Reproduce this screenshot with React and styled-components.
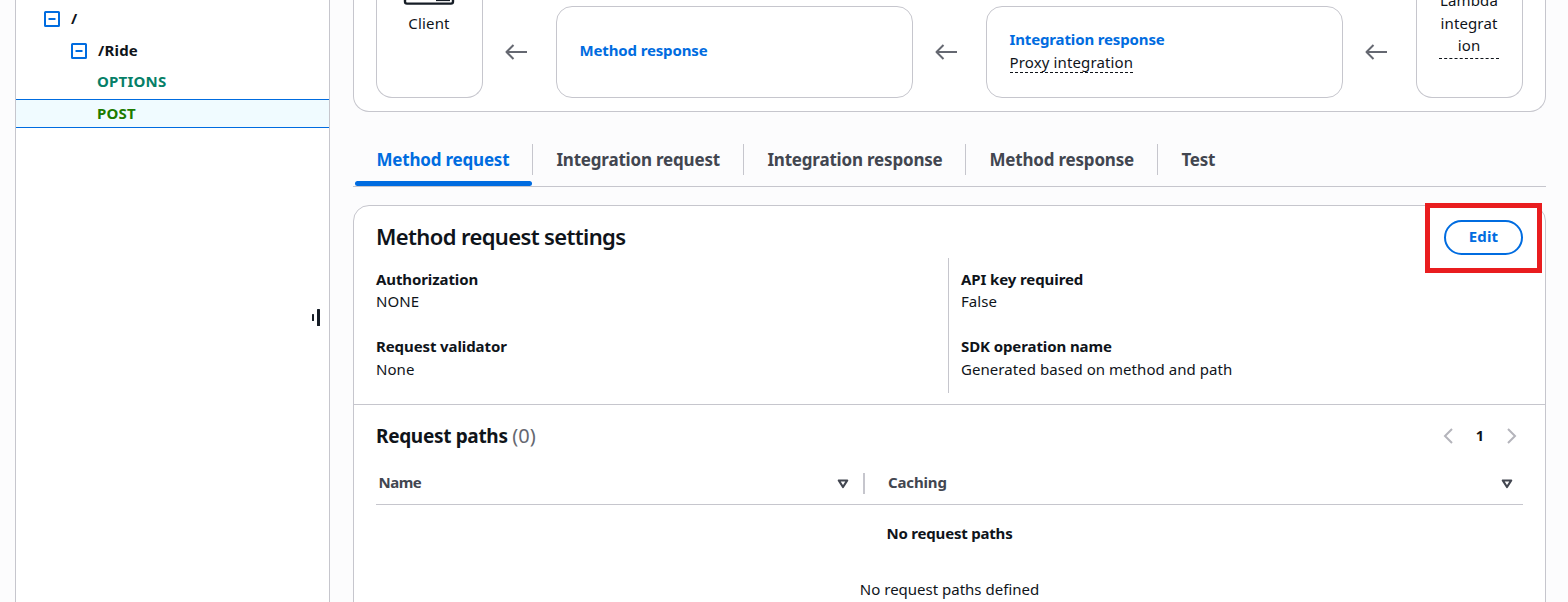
import React from "react";
import styled, { createGlobalStyle } from "styled-components";

const BLUE = "#006ce0";
const LINE = "#c6c6cd";

const GlobalStyle = createGlobalStyle`
  * { box-sizing: border-box; }
  body {
    margin: 0;
    height: 602px;
    overflow: hidden;
    background: #fcfcfd;
    color: #0f141a;
    font: 400 15px/22px "Noto Sans", "Open Sans", sans-serif;
  }
`;

const Page = styled.div`
  display: flex;
  align-items: flex-start;
  height: 602px;
  overflow: hidden;
`;

/* Resource tree */
const Sidebar = styled.aside`
  position: relative;
  flex: none;
  width: 315px;
  height: 602px;
  margin-left: 15px;
  padding-top: 3px;
  background: #fff;
  border: solid ${LINE};
  border-width: 0 1px;
`;

const TreeRow = styled.div`
  display: flex;
  align-items: center;
  gap: 11px;
  height: 32px;
  padding-left: ${(p) => p.$indent}px;
  font-weight: 700;
  letter-spacing: 0.2px;
`;

const TreeLabel = styled.span`
  height: 24px;
`;

const MethodRow = styled(TreeRow)`
  height: ${(p) => (p.$selected ? 29 : 32)}px;
  padding-bottom: ${(p) => (p.$selected ? 0 : 3)}px;
  color: ${(p) => p.$color};
  background: ${(p) => (p.$selected ? "#f0fbff" : "transparent")};
  border: solid ${(p) => (p.$selected ? BLUE : "transparent")};
  border-width: ${(p) => (p.$selected ? "1px 0" : 0)};
`;

const DragHandle = styled.div`
  position: absolute;
  top: 309px;
  right: 9px;
  display: flex;
  align-items: center;
  gap: 3px;
`;

const Grip = styled.span`
  width: ${(p) => p.$width}px;
  height: ${(p) => p.$height}px;
  background: #161d26;
  border-radius: 0.5px;
`;

/* Method execution flow */
const Main = styled.main`
  display: flex;
  flex-direction: column;
  width: 1193px;
  margin-left: 23px;
`;

const FlowCard = styled.section`
  display: flex;
  align-items: flex-end;
  height: 112px;
  padding: 0 22px 13px;
  background: #fff;
  border: 1px solid ${LINE};
  border-top: 0;
  border-radius: 0 0 16px 16px;
`;

const EndNode = styled.div`
  display: flex;
  flex-direction: column;
  align-items: center;
  flex: none;
  width: 107px;
  height: 98px;
  padding-right: 1px;
  border: 1px solid ${LINE};
  border-top: 0;
  border-radius: 0 0 16px 16px;
  text-align: center;
`;

const NodeLabel = styled.span`
  margin-top: 7px;
  letter-spacing: 0.15px;
`;

const LambdaLabel = styled.span`
  width: 60px;
  margin-top: -11px;
  padding-bottom: 1.5px;
  line-height: 22.5px;
  letter-spacing: 0.12px;
  word-break: break-all;
  border-bottom: 1px dashed #0f141a;
`;

const StepNode = styled.div`
  display: flex;
  flex-direction: column;
  align-items: flex-start;
  justify-content: center;
  flex: none;
  width: 357px;
  height: 92px;
  padding: 0 22.5px ${(p) => (p.$single ? 4 : 3)}px;
  border: 1px solid ${LINE};
  border-radius: 16px;
`;

const StepLink = styled.a`
  color: ${BLUE};
  font-weight: 700;
  letter-spacing: -0.14px;
`;

const Hint = styled.span`
  height: 22px;
  margin-top: 1px;
  line-height: 23px;
  letter-spacing: 0.13px;
  border-bottom: 1px dashed #0f141a;
`;

const ArrowCell = styled.div`
  display: flex;
  align-items: center;
  flex: none;
  width: 73px;
  height: 92px;
  padding-left: 22px;
`;

/* Tabs */
const Tabs = styled.nav`
  display: flex;
  height: 50px;
  margin-top: 25px;
  border-bottom: 1px solid ${LINE};
`;

const Tab = styled.div`
  display: flex;
  flex-direction: column;
  width: ${(p) => p.$width}px;
  color: ${(p) => (p.$active ? BLUE : "#424650")};
  font-size: 17px;
  font-weight: 700;
  letter-spacing: -0.19px;
`;

const TabLabel = styled.span`
  height: 31px;
  margin-top: 7px;
  padding-left: 23.4px;
  line-height: 31px;
  white-space: nowrap;
  border-right: ${(p) => (p.$last ? 0 : 1)}px solid ${LINE};
`;

const TabMarker = styled.span`
  height: 5px;
  margin: 6px 1px 0 2px;
  background: ${BLUE};
  border-radius: 3px;
`;

/* Settings panel */
const Panel = styled.section`
  height: 420px;
  margin-top: 18px;
  background: #fff;
  border: 1px solid ${LINE};
  border-radius: 16px 16px 0 0;
`;

const PanelHeader = styled.header`
  display: flex;
  align-items: flex-start;
  justify-content: space-between;
  height: 52px;
  padding: 14px 22px 0;
`;

const PanelTitle = styled.h2`
  margin: 1px 0 0;
  font-size: 22px;
  font-weight: 600;
  line-height: 30px;
  letter-spacing: -0.63px;
`;

const ButtonFrame = styled.div`
  position: relative;
`;

const EditButton = styled.button`
  display: block;
  width: 79px;
  height: 35px;
  padding: 0 0 4px;
  color: ${BLUE};
  background: #fff;
  border: 2px solid ${BLUE};
  border-radius: 18px;
  font: 700 15px/20px "Noto Sans", sans-serif;
  letter-spacing: 0.2px;
`;

const Highlight = styled.span`
  position: absolute;
  inset: -17px -19px -18px;
  border: 5px solid #e91d1f;
`;

const Settings = styled.div`
  display: grid;
  grid-template-columns: 572px 1fr;
  height: 135px;
  padding: 0 22px;
`;

const SettingsColumn = styled.dl`
  height: 135px;
  margin: 0;
  padding: 10px 0 0 ${(p) => (p.$divided ? 12 : 0)}px;
  border-left: ${(p) => (p.$divided ? 1 : 0)}px solid ${LINE};
`;

const Term = styled.dt`
  font-weight: 700;
  letter-spacing: -0.1px;
`;

const Value = styled.dd`
  margin: ${(p) => (p.$last ? "1px 0 0" : "0 0 23px")};
  letter-spacing: 0.05px;
`;

const TableHeading = styled.div`
  display: flex;
  align-items: center;
  justify-content: space-between;
  height: 61px;
  margin-top: 11px;
  padding: 1px 22px 0;
  border-top: 1px solid ${LINE};
`;

const TableTitle = styled.h3`
  margin: 0;
  font-size: 19px;
  font-weight: 700;
  line-height: 26px;
  letter-spacing: -0.32px;
`;

const Counter = styled.span`
  color: #656871;
  font-size: 20px;
  font-weight: 400;
  letter-spacing: 0;
`;

const Pager = styled.div`
  display: flex;
  align-items: center;
  justify-content: space-between;
  width: 74px;
  margin-right: 6px;
`;

const PageNumber = styled.span`
  height: 24px;
  font-size: 14.5px;
  font-weight: 700;
`;

const TableHead = styled.div`
  display: grid;
  grid-template-columns: 489px 1fr;
  height: 40px;
  margin: 0 22px;
  border-bottom: 1px solid ${LINE};
`;

const HeadCell = styled.div`
  display: flex;
  align-items: center;
  justify-content: space-between;
  height: 21px;
  margin-top: 8px;
  padding: ${(p) => p.$pad};
  color: #424650;
  font-weight: 700;
  letter-spacing: ${(p) => p.$spacing}px;
  border-right: ${(p) => (p.$divided ? 2 : 0)}px solid ${LINE};
`;

const HeadLabel = styled.span`
  height: 25px;
`;

const EmptyState = styled.div`
  padding-top: 17px;
  text-align: center;
`;

const EmptyTitle = styled.div`
  margin-bottom: 34px;
  font-weight: 700;
  letter-spacing: -0.2px;
`;

const CollapseIcon = () => (
  <svg width="16" height="16" viewBox="0 0 16 16" fill="none" stroke={BLUE} strokeWidth="2">
    <rect x="1" y="1" width="14" height="14" rx="0.5" />
    <path d="M4.5 8h7" />
  </svg>
);

const ArrowLeft = () => (
  <svg width="23" height="16" viewBox="0 0 23 16" fill="none" stroke="#656871" strokeWidth="2">
    <path d="M22 8H1.5M8.5 1L1.5 8L8.5 15" strokeLinejoin="round" />
  </svg>
);

const ClientIcon = () => (
  <svg width="52" height="5" viewBox="0 0 52 5" fill="none" stroke="#161d26">
    <path d="M2 -4V1.5Q2 3.6 4 3.6H48Q50 3.6 50 1.5V-4" strokeWidth="2.4" />
    <path d="M33 0.3H47" strokeWidth="1.6" />
  </svg>
);

const Chevron = ({ d }) => (
  <svg width="10" height="16" viewBox="0 0 10 16" fill="none" stroke="#b4b4bb" strokeWidth="2">
    <path d={d} />
  </svg>
);

const SortIcon = () => (
  <svg width="12" height="10" viewBox="0 0 12 10" fill="none" stroke="#424650" strokeWidth="2.2">
    <path d="M1.8 1.5H10.2L6 8Z" strokeLinejoin="round" />
  </svg>
);

const FlowArrow = () => (
  <ArrowCell>
    <ArrowLeft />
  </ArrowCell>
);

const TABS = [
  ["Method request", 180],
  ["Integration request", 211],
  ["Integration response", 222],
  ["Method response", 192],
  ["Test", 100],
];

const SETTINGS = [
  [["Authorization", "NONE"], ["Request validator", "None"]],
  [["API key required", "False"], ["SDK operation name", "Generated based on method and path"]],
];

export default function App() {
  return (
    <>
      <GlobalStyle />
      <Page>
        <Sidebar>
          <TreeRow $indent={28}><CollapseIcon /><TreeLabel>/</TreeLabel></TreeRow>
          <TreeRow $indent={55}><CollapseIcon /><TreeLabel>/Ride</TreeLabel></TreeRow>
          <MethodRow $indent={81} $color="#067f68"><TreeLabel>OPTIONS</TreeLabel></MethodRow>
          <MethodRow $indent={81} $color="#1d7c00" $selected><TreeLabel>POST</TreeLabel></MethodRow>
          <DragHandle>
            <Grip $width={2} $height={7} />
            <Grip $width={3} $height={17} />
          </DragHandle>
        </Sidebar>
        <Main>
          <FlowCard>
            <EndNode>
              <ClientIcon />
              <NodeLabel>Client</NodeLabel>
            </EndNode>
            <FlowArrow />
            <StepNode $single><StepLink>Method response</StepLink></StepNode>
            <FlowArrow />
            <StepNode>
              <StepLink>Integration response</StepLink>
              <Hint>Proxy integration</Hint>
            </StepNode>
            <FlowArrow />
            <EndNode>
              <LambdaLabel>Lambda integration</LambdaLabel>
            </EndNode>
          </FlowCard>
          <Tabs>
            {TABS.map(([label, width], i) => (
              <Tab key={label} $width={width} $active={i === 0}>
                <TabLabel $last={i === TABS.length - 1}>{label}</TabLabel>
                {i === 0 && <TabMarker />}
              </Tab>
            ))}
          </Tabs>
          <Panel>
            <PanelHeader>
              <PanelTitle>Method request settings</PanelTitle>
              <ButtonFrame>
                <EditButton>Edit</EditButton>
                <Highlight />
              </ButtonFrame>
            </PanelHeader>
            <Settings>
              {SETTINGS.map((items, i) => (
                <SettingsColumn key={i} $divided={i > 0}>
                  {items.map(([term, value], j) => (
                    <React.Fragment key={term}>
                      <Term>{term}</Term>
                      <Value $last={j === items.length - 1}>{value}</Value>
                    </React.Fragment>
                  ))}
                </SettingsColumn>
              ))}
            </Settings>
            <TableHeading>
              <TableTitle>Request paths <Counter>(0)</Counter></TableTitle>
              <Pager>
                <Chevron d="M9 1L2 8L9 15" />
                <PageNumber>1</PageNumber>
                <Chevron d="M1 1L8 8L1 15" />
              </Pager>
            </TableHeading>
            <TableHead>
              <HeadCell $pad="0 14px 0 2.5px" $spacing={-0.5} $divided><HeadLabel>Name</HeadLabel><SortIcon /></HeadCell>
              <HeadCell $pad="0 10px 0 23px" $spacing={-0.15}><HeadLabel>Caching</HeadLabel><SortIcon /></HeadCell>
            </TableHead>
            <EmptyState>
              <EmptyTitle>No request paths</EmptyTitle>
              <div>No request paths defined</div>
            </EmptyState>
          </Panel>
        </Main>
      </Page>
    </>
  );
}
